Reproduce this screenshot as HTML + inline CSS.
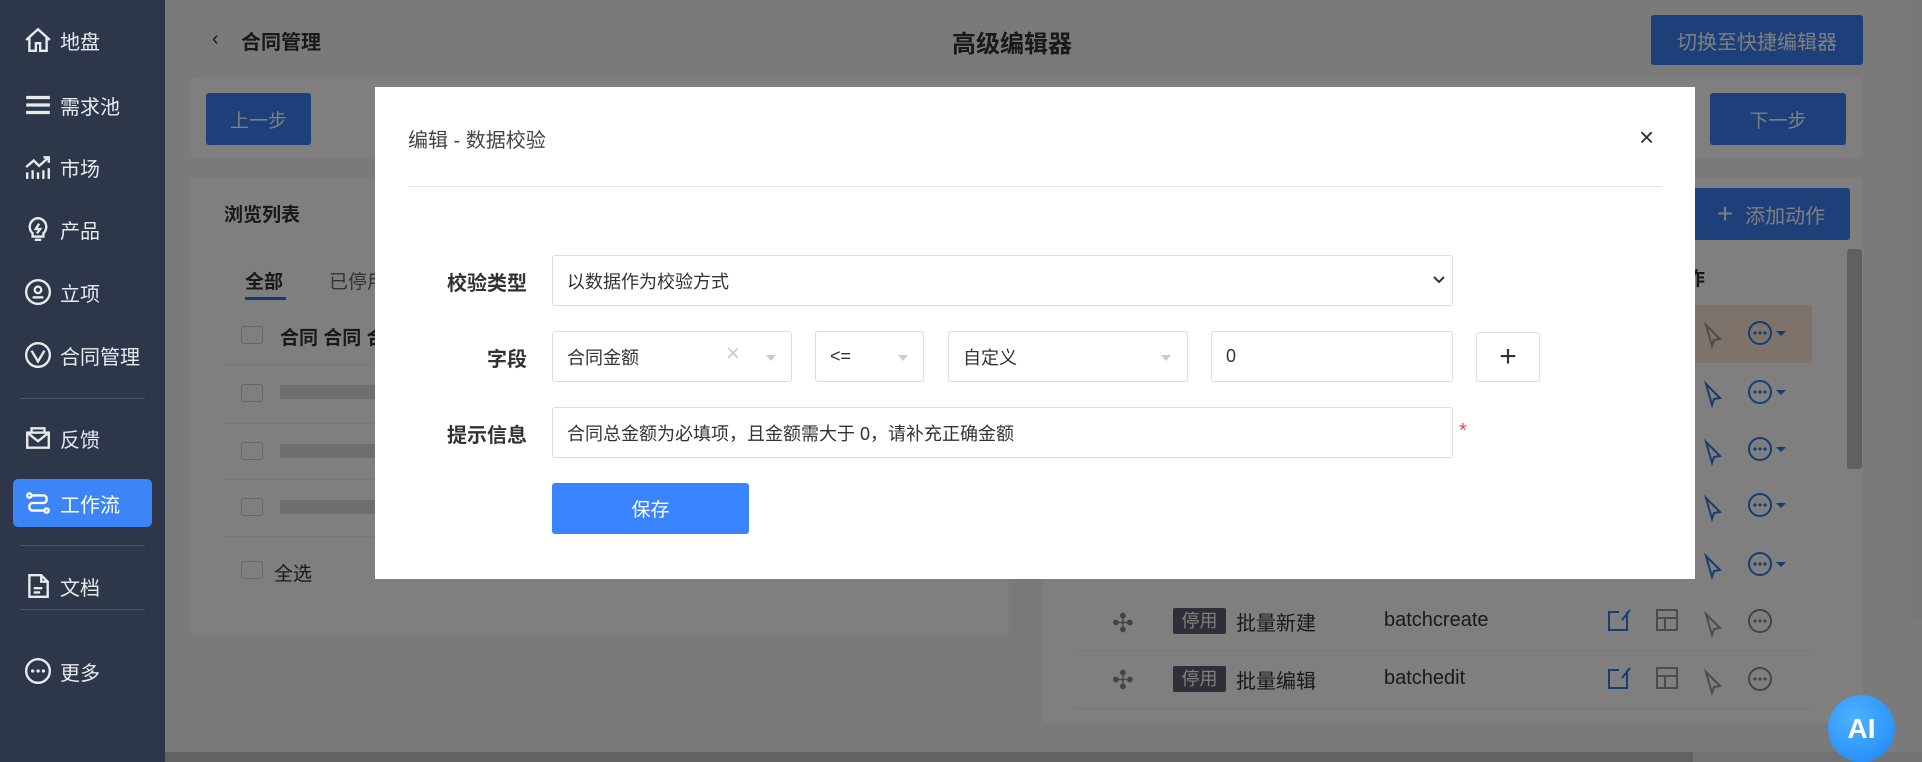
<!DOCTYPE html>
<html><head><meta charset="utf-8"><style>
*{box-sizing:border-box;margin:0;padding:0}
body{width:1922px;height:762px;overflow:hidden;position:relative;background:#f5f5f5;font-family:"Liberation Sans","Noto Sans CJK SC",sans-serif;color:#333}
.abs{position:absolute}
#side{left:0;top:0;width:165px;height:762px;background:#2e3749;color:#fff}
.si{position:absolute;left:24px;height:30px;display:flex;align-items:center;font-size:20px;color:#e8eaee}
.si svg{width:28px;height:28px;margin-right:8px;fill:none;stroke:#e8eaee;stroke-width:2.2}
.div{position:absolute;left:20px;width:125px;height:1px;background:#4a5366}
.card{position:absolute;background:#fff;border-radius:6px}
.btn{position:absolute;background:#3a7ff5;color:#fff;border-radius:3px;display:flex;align-items:center;justify-content:center;font-size:19px}
.cb{position:absolute;left:241px;width:22px;height:18px;border:1px solid #ccc;border-radius:3px;background:#fff}
.hl{position:absolute;height:1px;background:#eee}
.inp{position:absolute;border:1px solid #ddd;border-radius:3px;background:#fff;font-size:18px;color:#333;display:flex;align-items:center;padding-left:14px}
.lbl{position:absolute;right:1395px;font-size:20px;font-weight:bold;color:#333}
.tri{position:absolute;width:0;height:0;border-left:5px solid transparent;border-right:5px solid transparent;border-top:6px solid #c8cbd2}
</style></head><body>

<div class="abs" style="left:212px;top:28px;font-size:20px;color:#333">‹</div>
<div class="abs" style="left:241px;top:26px;font-size:20px;font-weight:bold">合同管理</div>
<div class="abs" style="left:952px;top:24px;font-size:24px;font-weight:bold">高级编辑器</div>
<div class="btn" style="left:1651px;top:15px;width:212px;height:50px;font-size:20px">切换至快捷编辑器</div>

<div class="card" style="left:190px;top:77px;width:1673px;height:81px"></div>
<div class="btn" style="left:206px;top:93px;width:105px;height:52px">上一步</div>
<div class="btn" style="left:1710px;top:93px;width:136px;height:52px">下一步</div>

<div class="card" style="left:190px;top:177px;width:819px;height:459px"></div>
<div class="abs" style="left:224px;top:200px;font-size:19px;font-weight:bold">浏览列表</div>
<div class="abs" style="left:245px;top:267px;font-size:19px;font-weight:bold">全部</div>
<div class="abs" style="left:245px;top:297px;width:41px;height:3px;background:#2d7be5"></div>
<div class="abs" style="left:329px;top:267px;font-size:19px;color:#666">已停用</div>
<div class="cb" style="top:326px"></div>
<div class="abs" style="left:280px;top:323px;font-size:19px;font-weight:bold">合同 合同 合</div>
<div class="hl" style="left:224px;top:364px;width:785px"></div>
<div class="cb" style="top:384px"></div><div class="abs" style="left:280px;top:385px;width:300px;height:14px;background:#ddd"></div>
<div class="hl" style="left:224px;top:423px;width:785px"></div>
<div class="cb" style="top:442px"></div><div class="abs" style="left:280px;top:444px;width:300px;height:14px;background:#ddd"></div>
<div class="hl" style="left:224px;top:479px;width:785px"></div>
<div class="cb" style="top:498px"></div><div class="abs" style="left:280px;top:500px;width:300px;height:14px;background:#ddd"></div>
<div class="hl" style="left:224px;top:536px;width:785px"></div>
<div class="cb" style="top:561px"></div>
<div class="abs" style="left:274px;top:559px;font-size:19px">全选</div>

<div class="card" style="left:1043px;top:177px;width:820px;height:546px"></div>
<div class="btn" style="left:1692px;top:188px;width:158px;height:52px;font-size:20px"><span style="font-size:28px;margin-right:12px">+</span>添加动作</div>
<div class="abs" style="left:1686px;top:264px;font-size:19px;font-weight:bold">作</div>
<div class="abs" style="left:1847px;top:249px;width:15px;height:220px;background:#c1c1c1;border-radius:3px"></div>
<div class="abs" style="left:1692px;top:305px;width:120px;height:58px;background:#fbe6d5"></div>

<div class="abs" style="left:1112px;top:608px;font-size:26px;color:#888">✣</div>
<div class="abs" style="left:1173px;top:608px;width:53px;height:26px;background:#5a6170;color:#fff;font-size:18px;text-align:center;line-height:26px;border-radius:2px">停用</div>
<div class="abs" style="left:1236px;top:607px;font-size:20px">批量新建</div>
<div class="abs" style="left:1384px;top:609px;font-size:20px">batchcreate</div>
<div class="hl" style="left:1075px;top:650px;width:740px"></div>
<div class="abs" style="left:1112px;top:665px;font-size:26px;color:#888">✣</div>
<div class="abs" style="left:1173px;top:666px;width:53px;height:26px;background:#5a6170;color:#fff;font-size:18px;text-align:center;line-height:26px;border-radius:2px">停用</div>
<div class="abs" style="left:1236px;top:665px;font-size:20px">批量编辑</div>
<div class="abs" style="left:1384px;top:667px;font-size:20px">batchedit</div>
<div class="hl" style="left:1075px;top:708px;width:740px"></div>
<svg class="abs" style="left:1600px;top:300px" width="230" height="400" fill="none" stroke-width="2">
 <g stroke="#2d7be5"><circle cx="160" cy="33" r="11"/><circle cx="160" cy="92" r="11"/><circle cx="160" cy="149" r="11"/><circle cx="160" cy="205" r="11"/><circle cx="160" cy="264" r="11"/></g>
 <g stroke="#888"><circle cx="160" cy="321" r="11"/><circle cx="160" cy="379" r="11"/></g>
 <g fill="#2d7be5" stroke="none"><path d="M176 31h10l-5 5z M176 90h10l-5 5z M176 147h10l-5 5z M176 203h10l-5 5z M176 262h10l-5 5z"/>
 <circle cx="155" cy="33" r="1.6"/><circle cx="160" cy="33" r="1.6"/><circle cx="165" cy="33" r="1.6"/>
 <circle cx="155" cy="92" r="1.6"/><circle cx="160" cy="92" r="1.6"/><circle cx="165" cy="92" r="1.6"/>
 <circle cx="155" cy="149" r="1.6"/><circle cx="160" cy="149" r="1.6"/><circle cx="165" cy="149" r="1.6"/>
 <circle cx="155" cy="205" r="1.6"/><circle cx="160" cy="205" r="1.6"/><circle cx="165" cy="205" r="1.6"/>
 <circle cx="155" cy="264" r="1.6"/><circle cx="160" cy="264" r="1.6"/><circle cx="165" cy="264" r="1.6"/></g>
 <g fill="#888" stroke="none"><circle cx="155" cy="321" r="1.6"/><circle cx="160" cy="321" r="1.6"/><circle cx="165" cy="321" r="1.6"/><circle cx="155" cy="379" r="1.6"/><circle cx="160" cy="379" r="1.6"/><circle cx="165" cy="379" r="1.6"/></g>
 <g stroke="#2d7be5"><path d="M27 312v18H9V312h10M22 320l8-10" /><path d="M27 370v18H9V370h10M22 378l8-10"/></g>
 <g stroke="#999"><rect x="57" y="310" width="20" height="20"/><rect x="57" y="368" width="20" height="20"/><path d="M57 318h20M65 318v12M57 376h20M65 376v12"/>
 <path d="M106 25l14 14-6 1-2 6zM106 314l14 14-6 1-2 6zM106 372l14 14-6 1-2 6z"/></g>
 <g stroke="#2d7be5"><path d="M106 84l14 14-6 1-2 6zM106 142l14 14-6 1-2 6zM106 198l14 14-6 1-2 6zM106 256l14 14-6 1-2 6z"/></g>
</svg>

<div class="abs" style="left:165px;top:752px;width:1757px;height:10px;background:#e6e6e6"></div>
<div class="abs" style="left:165px;top:752px;width:1528px;height:10px;background:#c4c4c4"></div>
<div class="abs" style="left:1906px;top:0;width:16px;height:620px;background:#f0f0f0"></div>

<div class="abs" style="left:165px;top:0;width:1757px;height:762px;background:rgba(0,0,0,.5)"></div>

<div id="side" class="abs">
 <div class="si" style="top:25px"><svg viewBox="0 0 26 26"><path d="M2 13L13 3l11 10M5 11v12h6v-7h4v7h6V11"/></svg>地盘</div>
 <div class="si" style="top:90px"><svg viewBox="0 0 26 26"><path d="M2 6h22M2 13h22M2 20h22" stroke-width="3"/></svg>需求池</div>
 <div class="si" style="top:152px"><svg viewBox="0 0 26 26"><path d="M2 13l7-6 5 5 9-8M18 4h5v5M3 18v6M8 16v8M13 18v6M18 16v8M23 14v10"/></svg>市场</div>
 <div class="si" style="top:214px"><svg viewBox="0 0 26 26"><path d="M13 3a8 8 0 0 0-5 14v3h10v-3a8 8 0 0 0-5-14zM10 23h6M14 8l-3 5h4l-3 4"/></svg>产品</div>
 <div class="si" style="top:277px"><svg viewBox="0 0 26 26"><circle cx="13" cy="13" r="11"/><circle cx="13" cy="11" r="3"/><path d="M8 18h10"/></svg>立项</div>
 <div class="si" style="top:340px"><svg viewBox="0 0 26 26"><circle cx="13" cy="13" r="11"/><path d="M7 9l6 10 6-10"/></svg>合同管理</div>
 <div class="div" style="top:398px"></div>
 <div class="si" style="top:423px"><svg viewBox="0 0 26 26"><rect x="3" y="8" width="20" height="14"/><path d="M3 8l10 8 10-8M7 8V4h12v4"/></svg>反馈</div>
 <div style="position:absolute;left:13px;top:479px;width:139px;height:48px;background:#3b85f7;border-radius:5px"></div>
 <div class="si" style="top:488px;color:#fff"><svg viewBox="0 0 26 26" style="stroke:#fff"><circle cx="5" cy="6" r="2"/><circle cx="21" cy="20" r="2"/><path d="M7 6h12a4 4 0 0 1 0 7H7a4 4 0 0 0 0 7h12"/></svg>工作流</div>
 <div class="div" style="top:545px"></div>
 <div class="si" style="top:571px"><svg viewBox="0 0 26 26"><path d="M5 3h11l6 6v14H5zM16 3v6h6M9 15h8M9 19h6"/></svg>文档</div>
 <div class="div" style="top:609px"></div>
 <div class="si" style="top:656px"><svg viewBox="0 0 26 26"><circle cx="13" cy="13" r="11"/><path d="M8 13h.1M13 13h.1M18 13h.1" stroke-width="3" stroke-linecap="round"/></svg>更多</div>
</div>

<div class="abs" style="left:375px;top:87px;width:1320px;height:492px;background:#fff"></div>
<div class="abs" style="left:408px;top:124px;font-size:20px;color:#444">编辑 - 数据校验</div>
<div class="abs" style="left:1639px;top:122px;font-size:26px;color:#333">×</div>
<div class="abs" style="left:408px;top:186px;width:1254px;height:1px;background:#e5e5e5"></div>

<div class="lbl" style="top:267px">校验类型</div>
<div class="inp" style="left:552px;top:255px;width:901px;height:51px">以数据作为校验方式</div>
<svg class="abs" style="left:1432px;top:275px" width="14" height="10"><path d="M2 2l5 5 5-5" fill="none" stroke="#333" stroke-width="2"/></svg>

<div class="lbl" style="top:343px">字段</div>
<div class="inp" style="left:552px;top:331px;width:240px;height:51px">合同金额</div>
<div class="abs" style="left:726px;top:340px;font-size:24px;color:#c8cbd2">×</div>
<div class="tri" style="left:766px;top:355px"></div>
<div class="inp" style="left:815px;top:331px;width:109px;height:51px">&lt;=</div>
<div class="tri" style="left:898px;top:355px"></div>
<div class="inp" style="left:948px;top:331px;width:240px;height:51px">自定义</div>
<div class="tri" style="left:1161px;top:355px"></div>
<div class="inp" style="left:1211px;top:331px;width:242px;height:51px">0</div>
<div class="inp" style="left:1476px;top:332px;width:64px;height:50px;padding:0;justify-content:center;font-size:30px;color:#333">+</div>

<div class="lbl" style="top:419px">提示信息</div>
<div class="inp" style="left:552px;top:407px;width:901px;height:51px">合同总金额为必填项，且金额需大于 0，请补充正确金额</div>
<div class="abs" style="left:1459px;top:420px;font-size:20px;color:#f04a4a">*</div>

<div class="btn" style="left:552px;top:483px;width:197px;height:51px;background:#3a84ff;font-size:19px">保存</div>

<div class="abs" style="left:1828px;top:695px;width:67px;height:67px;border-radius:50%;background:radial-gradient(circle at 40% 35%,#4fb2ff,#1a86f5);color:#fff;font-weight:bold;font-size:28px;display:flex;align-items:center;justify-content:center">AI</div>
</body></html>
